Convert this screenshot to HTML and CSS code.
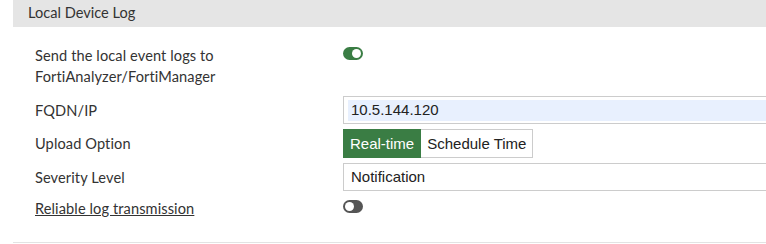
FILE: index.html
```html
<!DOCTYPE html>
<html>
	<head>
		<meta charset="utf-8">
		<title>Local Device Log</title>
		<link rel="stylesheet" href="styles.css">
	</head>
	<body>
		<div class="section">
			<div class="sectionTitle">Local Device Log</div>
			<div class="formBody">
				<div class="row rowFirst">
					<label class="lbl">Send the local event logs to<br>FortiAnalyzer/FortiManager</label>
					<div class="ctrl"><span class="toggle on"></span></div>
				</div>
				<div class="row">
					<label class="lbl">FQDN/IP</label>
					<div class="ctrl"><div class="inputBox"><span class="autofill">10.5.144.120</span></div></div>
				</div>
				<div class="row">
					<label class="lbl">Upload Option</label>
					<div class="ctrl">
						<div class="btnGroup">
							<span class="btn active">Real-time</span>
							<span class="btn">Schedule Time</span>
						</div>
					</div>
				</div>
				<div class="row">
					<label class="lbl">Severity Level</label>
					<div class="ctrl"><div class="inputBox select">Notification</div></div>
				</div>
				<div class="row rowLast">
					<label class="lbl"><a href="#">Reliable log transmission</a></label>
					<div class="ctrl"><span class="toggle"></span></div>
				</div>
			</div>
		</div>
	</body>
</html>
```
FILE: styles.css
```css
*{margin: 0;padding: 0;box-sizing: border-box;}
html,body{overflow: hidden;}
body{
	background: #fff;
	color: #333;
	font-family: Lato, "Liberation Sans", sans-serif;
	font-size: 14.6px;
}
.section{margin-left: 13px;border-bottom: 1px solid #e3e3e3;}
.sectionTitle{
	height: 27px;
	line-height: 26px;
	padding-left: 15px;
	background: #e5e5e5;
	color: #333;
}
.formBody{
	padding: 18px 0 23px 22px;
	display: flex;
	flex-direction: column;
	gap: 5px;
}
.row{display: flex;align-items: center;}
.rowFirst{align-items: flex-start;margin-bottom: 4px;}
.rowLast{margin-top: 2px;align-items: flex-start;}
.lbl{
	width: 308px;
	flex: none;
	line-height: 21px;
	color: #333;
	letter-spacing: 0.1px;
}
.lbl a{color: #333;text-decoration: underline;}
.ctrl{flex: none;display: flex;}
.toggle{
	display: block;
	width: 20px;
	height: 13px;
	border-radius: 7px;
	background: #555;
	position: relative;
	margin-top: 2px;
}
.toggle::after{
	content: '';
	position: absolute;
	left: 2px;
	top: 2px;
	width: 9px;
	height: 9px;
	border-radius: 50%;
	background: #fff;
}
.toggle.on{background: #3a7d44;}
.toggle.on::after{left: 9px;}
.inputBox{
	width: 440px;
	height: 28px;
	border: 1px solid #ccc;
	padding: 3px 4px;
	font-family: "Liberation Sans", Arial, sans-serif;
	font-size: 15px;
	color: #222;
	line-height: 20px;
}
.autofill{
	display: block;
	height: 21px;
	background: #e8f0fe;
	padding-left: 3px;
}
.select{padding-left: 7px;}
.btnGroup{display: flex;}
.btn{
	height: 29px;
	line-height: 27px;
	border: 1px solid #ccc;
	padding: 0 6px;
	font-family: "Liberation Sans", Arial, sans-serif;
	font-size: 15px;
	color: #222;
	background: #fff;
}
.btn.active{background: #3a7d44;border-color: #3a7d44;color: #fff;}
.btn + .btn{border-left: none;}
```
